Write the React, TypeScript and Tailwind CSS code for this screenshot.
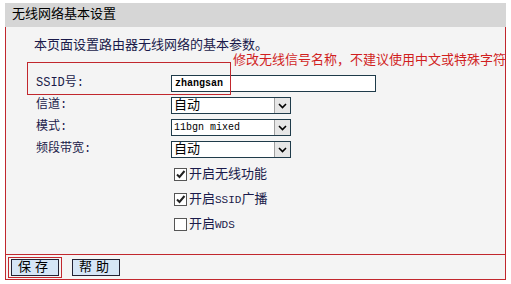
import React from "react";

const FONT = "font-['Liberation_Mono','Noto_Sans_CJK_SC',monospace]";

function Select({ value, mono }: { value: string; mono?: boolean }) {
  return (
    <div className="flex h-[17px] w-[120px] border border-[#1f3b4a] bg-white">
      <div
        className={`flex-1 pl-[2px] leading-[15px] text-black ${
          mono ? "text-[10px] font-['Liberation_Mono',monospace]" : "text-[13px]"
        }`}
      >
        {value}
      </div>
      <div className="flex w-[16px] items-center justify-center border-l border-[#a0a0a0] bg-[#e6e6e6]">
        <svg width="9" height="6" viewBox="0 0 9 6">
          <path d="M1 1 L4.5 4.5 L8 1" fill="none" stroke="#000" strokeWidth="1.6" />
        </svg>
      </div>
    </div>
  );
}

function Check({ checked, label }: { checked: boolean; label: React.ReactNode }) {
  return (
    <div className="flex h-[25px] items-center gap-[2px] pl-[3px]">
      <div className="flex h-[13px] w-[13px] items-center justify-center border border-[#555] bg-white">
        {checked && (
          <svg width="11" height="11" viewBox="0 0 11 11">
            <path d="M2 5.5 L4.5 8 L9.5 2" fill="none" stroke="#222" strokeWidth="2" />
          </svg>
        )}
      </div>
      <span className="text-[13px] leading-[17px] text-[#1a1a4a]">{label}</span>
    </div>
  );
}

export default function App() {
  return (
    <div className={`h-[284px] w-[511px] bg-white pt-[3px] pl-[5px] ${FONT}`}>
      <div className="w-[501px]">
        <div className="flex h-[24px] items-center bg-[#d6d6d6] pl-[7px] text-[13px] text-black">
          无线网络基本设置
        </div>
        <div className="relative border-x border-b border-[#c1272d] bg-[#f4f4f4]">
          <div className="pl-[28px] pt-[10px] text-[13px] leading-[18px] text-[#1a1a4a]">
            本页面设置路由器无线网络的基本参数。
          </div>
          <div className="grid grid-cols-[135px_1fr] items-center gap-y-[5px] pt-[20px] pl-[30px] text-[12px] leading-[17px] text-[#1a1a4a]">
            <div className="h-[17px]">SSID号:</div>
            <div className="h-[17px] w-[205px] border border-[#1f3b4a] bg-white pl-[3px] text-[10px] font-bold leading-[15px] text-black">
              zhangsan
            </div>
            <div className="h-[17px]">信道:</div>
            <Select value="自动" />
            <div className="h-[17px]">模式:</div>
            <Select value="11bgn mixed" mono />
            <div className="h-[17px]">频段带宽:</div>
            <Select value="自动" />
          </div>
          <div className="pl-[165px] pt-[4px] pb-[17px]">
            <Check checked label="开启无线功能" />
            <Check checked label={<>开启<span className="text-[11px]">SSID</span>广播</>} />
            <Check checked={false} label={<>开启<span className="text-[11px]">WDS</span></>} />
          </div>
          <div className="flex h-[25px] items-center gap-[10px] border-t border-[#c1272d] pl-[2px]">
            <div className="border border-[#c1272d] px-[2px] py-[1px]">
              <button className="block h-[17px] w-[48px] border border-[#223] bg-[#d6e6f6] text-[13px] leading-[15px] tracking-[4px] text-black">
                保存
              </button>
            </div>
            <button className="h-[17px] w-[48px] border border-[#223] bg-[#d6e6f6] text-[13px] leading-[15px] tracking-[4px] text-black">
              帮助
            </button>
          </div>
          <div className="absolute left-[21px] top-[35px] h-[33px] w-[204px] border border-[#c1272d]" />
          <div className="absolute left-[227px] top-[26px] whitespace-nowrap text-[13px] leading-[16px] text-[#d11f1f]">
            修改无线信号名称，不建议使用中文或特殊字符
          </div>
        </div>
      </div>
    </div>
  );
}
